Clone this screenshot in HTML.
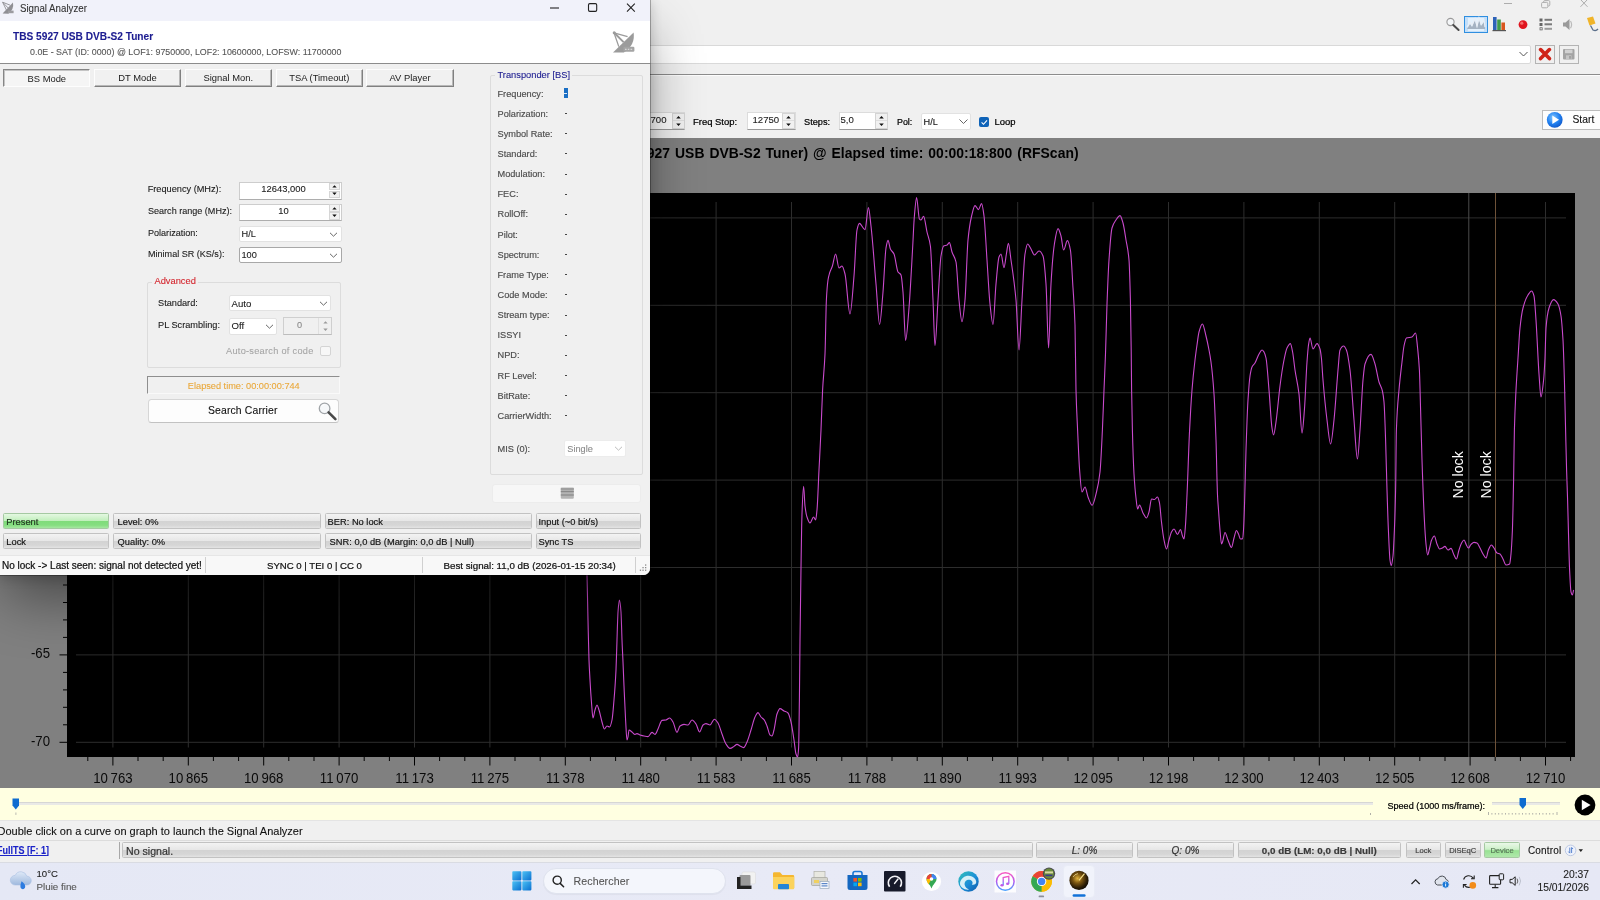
<!DOCTYPE html>
<html><head><meta charset="utf-8"><title>Signal Analyzer</title>
<style>

*{box-sizing:border-box}
html,body{margin:0;padding:0}
body{width:1600px;height:900px;overflow:hidden;background:#f0f0f0;font-family:"Liberation Sans",sans-serif;font-size:9.2px;color:#1a1a1a;position:relative}
.a{position:absolute;white-space:pre}
.t{position:absolute;white-space:pre;line-height:12px;height:12px;-webkit-text-stroke:.1px currentColor}
.btn3d{position:absolute;background:#f1f1f1;border:1px solid;border-color:#fdfdfd #808080 #808080 #fdfdfd;box-shadow:inset -1px -1px 0 #b8b8b8;text-align:center;font-size:9.4px;line-height:15px}
.btn3d.down{background:#f5f5f5;border-color:#868686 #fdfdfd #fdfdfd #868686;box-shadow:inset 1px 1px 0 #c4c4c4;line-height:17px}
.edit{position:absolute;background:#fff;border:1px solid #cdcdcd;border-bottom-color:#adadad}
.combo{position:absolute;background:#fff;border:1px solid #e2e2e2;border-radius:2px}
.pn{position:absolute;border:1px solid #c2c2c2;border-radius:1.5px;background:linear-gradient(#f3f3f3 0%,#e7e7e7 47%,#d3d3d3 53%,#d6d6d6 80%,#e3e3e3 100%);font-size:9.3px;line-height:16px;height:16px;white-space:pre;overflow:hidden;-webkit-text-stroke:.18px currentColor;color:#161616}
.pn.g{background:linear-gradient(#e4f8e1 0%,#c2efbd 47%,#80dc7b 53%,#86de81 80%,#a6e7a1 100%);border-color:#a5c9a2}
.lbl{color:#4c4c4c;-webkit-text-stroke:.15px #4c4c4c}
.sb{-webkit-text-stroke:.22px currentColor}

</style></head>
<body>
<div id="root" style="position:absolute;left:0;top:0;width:1600px;height:900px;overflow:hidden;will-change:transform">

<!-- main window top chrome -->
<div class="a" style="left:0;top:0;width:1600px;height:138px;background:#f0f0f0"></div>
<svg class="a" style="left:1495px;top:0" width="105" height="12" viewBox="0 0 105 12">
 <line x1="9" y1="3.5" x2="17" y2="3.5" stroke="#adadad" stroke-width="1"/>
 <rect x="46.6" y="2.4" width="6.2" height="5.4" rx="1.2" fill="none" stroke="#adadad" stroke-width="1"/>
 <path d="M48.6 2.2 V1.8 a1.2 1.2 0 0 1 1.2 -1.2 H53.6 a1.2 1.2 0 0 1 1.2 1.2 V4.8 a1.2 1.2 0 0 1 -1.2 1.2 H53" fill="none" stroke="#adadad" stroke-width="1"/>
 <path d="M85.5 -0.5 L92.5 6.8 M92.5 -0.5 L85.5 6.8" stroke="#adadad" stroke-width="1" fill="none"/>
</svg>
<!-- toolbar icons -->
<svg class="a" style="left:1440px;top:12px" width="160" height="26" viewBox="1440 12 160 26">
 <!-- magnifier -->
 <circle cx="1450.5" cy="22" r="3.6" fill="#f4f6f8" stroke="#9a9a9a" stroke-width="1.1"/>
 <line x1="1453.3" y1="25" x2="1458.6" y2="30" stroke="#4a4a4a" stroke-width="2" stroke-linecap="round"/>
 <!-- selected spectrum button -->
 <rect x="1464.5" y="16.5" width="23" height="16" fill="#c4dff9" stroke="#2f8fe0" stroke-width="1"/>
 <rect x="1468" y="18" width="16" height="13" fill="#fff" opacity=".55"/>
 <path d="M1467 29 L1470 24 L1472 27 L1475 20 L1477 28 L1479 19 L1481 26 L1484 22 L1485 29 Z" fill="#9aa8b8" opacity=".85"/>
 <path d="M1467 27 L1470 22 L1472 25 L1475 18.5 L1477 26 L1479 18 L1481 24 L1484 20 L1485 27" fill="none" stroke="#e8eef6" stroke-width="1.2"/>
 <!-- bar chart -->
 <rect x="1493" y="17" width="3.6" height="13.5" fill="#2d62b8"/>
 <rect x="1497.2" y="19.5" width="3.6" height="11" fill="#3f9a4d"/>
 <rect x="1501.4" y="22.5" width="3.6" height="8" fill="#d8561f"/>
 <rect x="1492.5" y="30" width="13.5" height="1.2" fill="#555"/>
 <!-- red dot -->
 <circle cx="1523" cy="24.6" r="4.4" fill="#e0151f"/>
 <circle cx="1521.8" cy="23.2" r="1.6" fill="#f46a6a"/>
 <!-- list icon -->
 <rect x="1539.5" y="18.5" width="3" height="3" fill="#666"/>
 <rect x="1539.5" y="23" width="3" height="3" fill="#666"/>
 <rect x="1540" y="27.7" width="2.2" height="2.2" fill="none" stroke="#666" stroke-width=".8"/>
 <rect x="1544.5" y="18.8" width="7.5" height="2" fill="#7a7a7a"/>
 <rect x="1544.5" y="23.3" width="7.5" height="2" fill="#7a7a7a"/>
 <rect x="1544.5" y="27.8" width="7.5" height="2" fill="#9a9a9a"/>
 <!-- speaker -->
 <path d="M1563 22.5 h2.5 l4 -3.5 v11 l-4 -3.5 h-2.5z" fill="#9a9a9a"/>
 <path d="M1570.5 21 q2.2 3.6 0 7.2" fill="none" stroke="#bbb" stroke-width="1.2"/>
 <!-- pin -->
 <path d="M1587 18 l6 -1.5 l2.5 7 l-6 2z" fill="#f0b429"/>
 <path d="M1590.5 25.5 l2.5 4.5 q3 1.5 5 -1" fill="none" stroke="#5a6f8a" stroke-width="1.3"/>
</svg>
<!-- combobox row -->
<div class="a" style="left:600px;top:45px;width:931px;height:19px;background:#fff;border:1px solid #d9d9d9;border-radius:2px"></div>
<svg class="a" style="left:1518px;top:50px" width="11" height="8" viewBox="0 0 11 8"><path d="M1.5 2 L5.5 6 L9.5 2" fill="none" stroke="#555" stroke-width="1"/></svg>
<div class="a" style="left:1535px;top:44.5px;width:20px;height:19.5px;background:#f0f0f0;border:1px solid #b4b4b4"></div>
<svg class="a" style="left:1538px;top:47px" width="14" height="14" viewBox="0 0 14 14"><path d="M2.6 2.6 L11.4 11.6 M11.4 2.6 L2.6 11.6" stroke="#cf2418" stroke-width="3.6" stroke-linecap="round"/></svg>
<div class="a" style="left:1559px;top:44.5px;width:19.5px;height:19.5px;background:#f0f0f0;border:1px solid #b4b4b4"></div>
<svg class="a" style="left:1562px;top:48px" width="14" height="13" viewBox="0 0 14 13"><rect x="1" y="1" width="11.5" height="10.5" rx="1" fill="#a4a4a4"/><rect x="3" y="1.6" width="7.5" height="3.6" fill="#d2d2d2"/><rect x="4" y="7.3" width="5.5" height="4.2" fill="#c6c6c6"/><rect x="7.2" y="8" width="1.6" height="2.8" fill="#9a9a9a"/></svg>
<div class="a" style="left:0;top:74px;width:1600px;height:1px;background:#8c8c8c"></div>
<div class="a" style="left:0;top:75px;width:1600px;height:1px;background:#fdfdfd"></div>
<!-- scan params row -->
<div class="edit" style="left:620px;top:112px;width:65px;height:17.5px;border-color:#dcdcdc;border-bottom-color:#9a9a9a"></div>
<div class="t" style="left:650.5px;top:113.5px;font-size:9.6px;color:#222">700</div>
<div class="a" style="left:672px;top:112.5px;width:13px;height:16.5px;background:#f1f1f1;border:1px solid #d4d4d4"></div><div class="a" style="left:673px;top:120.4px;width:11px;height:1px;background:#dedede"></div><svg class="a" style="left:674px;top:114px" width="9" height="14" viewBox="0 0 9 14"><path d="M2.2 4.6 L4.5 2 L6.8 4.6z M2.2 9.4 L4.5 12 L6.8 9.4z" fill="#111"/></svg>
<div class="t sb" style="left:693px;top:116px;font-size:9.45px;color:#000">Freq Stop:</div>
<div class="edit" style="left:746.5px;top:112px;width:49px;height:17.5px;border-color:#dcdcdc;border-bottom-color:#9a9a9a"></div>
<div class="t" style="left:752.5px;top:113.5px;font-size:9.6px;color:#222">12750</div>
<div class="a" style="left:782px;top:112.5px;width:13px;height:16.5px;background:#f1f1f1;border:1px solid #d4d4d4"></div><div class="a" style="left:783px;top:120.4px;width:11px;height:1px;background:#dedede"></div><svg class="a" style="left:784px;top:114px" width="9" height="14" viewBox="0 0 9 14"><path d="M2.2 4.6 L4.5 2 L6.8 4.6z M2.2 9.4 L4.5 12 L6.8 9.4z" fill="#111"/></svg>
<div class="t sb" style="left:804px;top:116px;font-size:9.2px;color:#000">Steps:</div>
<div class="edit" style="left:838.5px;top:112px;width:49.5px;height:17.5px;border-color:#dcdcdc;border-bottom-color:#9a9a9a"></div>
<div class="t" style="left:840.5px;top:113.5px;font-size:9.6px;color:#222">5,0</div>
<div class="a" style="left:874.5px;top:112.5px;width:13px;height:16.5px;background:#f1f1f1;border:1px solid #d4d4d4"></div><div class="a" style="left:875.5px;top:120.4px;width:11px;height:1px;background:#dedede"></div><svg class="a" style="left:876.5px;top:114px" width="9" height="14" viewBox="0 0 9 14"><path d="M2.2 4.6 L4.5 2 L6.8 4.6z M2.2 9.4 L4.5 12 L6.8 9.4z" fill="#111"/></svg>
<div class="t sb" style="left:897px;top:116px;font-size:8.9px;color:#000">Pol:</div>
<div class="combo" style="left:920.5px;top:112.5px;width:50.5px;height:17px"></div>
<div class="t" style="left:923.5px;top:115.5px;font-size:9.2px;color:#111">H/L</div>
<svg class="a" style="left:958px;top:118px" width="11" height="8" viewBox="0 0 11 8"><path d="M1.5 1.5 L5.5 5.5 L9.5 1.5" fill="none" stroke="#666" stroke-width="1"/></svg>
<div class="a" style="left:978.5px;top:116.5px;width:10.5px;height:10.5px;background:#0f63b8;border-radius:2px"></div>
<svg class="a" style="left:978.5px;top:116.5px" width="10.5" height="10.5" viewBox="0 0 10.5 10.5"><path d="M2.6 5.4 L4.5 7.3 L8 3.4" fill="none" stroke="#fff" stroke-width="1.1"/></svg>
<div class="t sb" style="left:994.5px;top:116px;font-size:9.45px;color:#000">Loop</div>
<!-- start button -->
<div class="a" style="left:1541.5px;top:109.5px;width:60px;height:20.5px;background:#fdfdfd;border:1px solid #bcbcbc"></div>
<svg class="a" style="left:1546px;top:111px" width="18" height="18" viewBox="0 0 18 18">
 <defs><radialGradient id="pb" cx="40%" cy="35%" r="75%"><stop offset="0" stop-color="#7ec4ff"/><stop offset=".55" stop-color="#1f7ff0"/><stop offset="1" stop-color="#0d4fc0"/></radialGradient></defs>
 <circle cx="8.7" cy="8.8" r="7.9" fill="url(#pb)"/>
 <path d="M6.3 4.6 L13 8.8 L6.3 13z" fill="#fff"/>
</svg>
<div class="t" style="left:1572.5px;top:113.5px;font-size:10.3px;color:#111">Start</div>

<svg style="position:absolute;left:0;top:138px" width="1600" height="650" viewBox="0 138 1600 650">
<rect x="0" y="138" width="1600" height="650" fill="#808080"/>
<rect x="67" y="193" width="1508" height="564" fill="#000"/>
<line x1="112.9" y1="202" x2="112.9" y2="747.5" stroke="#2d2d2d" stroke-width="1"/>
<line x1="188.3" y1="202" x2="188.3" y2="747.5" stroke="#2d2d2d" stroke-width="1"/>
<line x1="263.7" y1="202" x2="263.7" y2="747.5" stroke="#2d2d2d" stroke-width="1"/>
<line x1="339.1" y1="202" x2="339.1" y2="747.5" stroke="#2d2d2d" stroke-width="1"/>
<line x1="414.5" y1="202" x2="414.5" y2="747.5" stroke="#2d2d2d" stroke-width="1"/>
<line x1="489.9" y1="202" x2="489.9" y2="747.5" stroke="#2d2d2d" stroke-width="1"/>
<line x1="565.3" y1="202" x2="565.3" y2="747.5" stroke="#2d2d2d" stroke-width="1"/>
<line x1="640.7" y1="202" x2="640.7" y2="747.5" stroke="#2d2d2d" stroke-width="1"/>
<line x1="716.1" y1="202" x2="716.1" y2="747.5" stroke="#2d2d2d" stroke-width="1"/>
<line x1="791.5" y1="202" x2="791.5" y2="747.5" stroke="#2d2d2d" stroke-width="1"/>
<line x1="866.9" y1="202" x2="866.9" y2="747.5" stroke="#2d2d2d" stroke-width="1"/>
<line x1="942.3" y1="202" x2="942.3" y2="747.5" stroke="#2d2d2d" stroke-width="1"/>
<line x1="1017.7" y1="202" x2="1017.7" y2="747.5" stroke="#2d2d2d" stroke-width="1"/>
<line x1="1093.1" y1="202" x2="1093.1" y2="747.5" stroke="#2d2d2d" stroke-width="1"/>
<line x1="1168.5" y1="202" x2="1168.5" y2="747.5" stroke="#2d2d2d" stroke-width="1"/>
<line x1="1243.9" y1="202" x2="1243.9" y2="747.5" stroke="#2d2d2d" stroke-width="1"/>
<line x1="1319.3" y1="202" x2="1319.3" y2="747.5" stroke="#2d2d2d" stroke-width="1"/>
<line x1="1394.7" y1="202" x2="1394.7" y2="747.5" stroke="#2d2d2d" stroke-width="1"/>
<line x1="1545.5" y1="202" x2="1545.5" y2="747.5" stroke="#2d2d2d" stroke-width="1"/>
<line x1="76" y1="742.3" x2="1566" y2="742.3" stroke="#2d2d2d" stroke-width="1"/>
<line x1="76" y1="654.9" x2="1566" y2="654.9" stroke="#2d2d2d" stroke-width="1"/>
<line x1="76" y1="567.5" x2="1566" y2="567.5" stroke="#2d2d2d" stroke-width="1"/>
<line x1="76" y1="480.1" x2="1566" y2="480.1" stroke="#2d2d2d" stroke-width="1"/>
<line x1="76" y1="392.7" x2="1566" y2="392.7" stroke="#2d2d2d" stroke-width="1"/>
<line x1="76" y1="305.3" x2="1566" y2="305.3" stroke="#2d2d2d" stroke-width="1"/>
<line x1="76" y1="217.9" x2="1566" y2="217.9" stroke="#2d2d2d" stroke-width="1"/>
<line x1="1468.8" y1="193" x2="1468.8" y2="757" stroke="#4c4c4c" stroke-width="1"/>
<line x1="1495.5" y1="193" x2="1495.5" y2="757" stroke="#6e5238" stroke-width="1"/>
<path d="M586.5,560.0C586.7,565.0 586.8,569.1 587.0,575.0C587.3,586.7 587.7,605.9 588.0,620.0C588.3,634.1 588.7,651.1 589.0,660.0C589.3,668.9 589.7,674.2 590.0,680.0C590.5,689.2 591.1,697.6 591.6,704.0C592.1,709.6 592.5,718.0 593.0,718.0C593.7,718.0 594.3,712.1 595.0,710.0C595.7,707.9 596.3,705.0 597.0,705.0C597.7,705.0 598.3,708.0 599.0,710.0C600.0,713.0 601.0,718.6 602.0,722.0C602.8,724.7 603.6,729.0 604.4,729.0C605.3,729.0 606.1,726.0 607.0,726.0C607.9,726.0 608.7,727.0 609.6,727.0C610.4,727.0 611.2,723.7 612.0,720.0C612.7,716.9 613.3,708.0 614.0,700.0C614.7,692.0 615.3,683.8 616.0,670.0C616.3,663.1 616.7,649.7 617.0,640.0C617.3,630.3 617.7,616.5 618.0,612.0C618.5,605.7 618.9,600.0 619.4,600.0C619.9,600.0 620.5,605.4 621.0,612.0C621.3,616.1 621.7,631.8 622.0,640.0C622.3,648.2 622.7,654.3 623.0,662.0C623.3,669.7 623.7,678.5 624.0,686.0C624.5,698.1 625.1,710.9 625.6,720.0C626.1,727.9 626.5,740.0 627.0,740.0C627.3,740.0 627.7,738.4 628.0,737.0C628.3,735.6 628.7,730.0 629.0,730.0C630.0,730.0 631.0,731.3 632.0,732.0C633.0,732.7 634.0,734.4 635.0,734.4C635.7,734.4 636.3,733.6 637.0,733.6C638.0,733.6 639.0,734.7 640.0,735.0C641.3,735.4 642.7,735.8 644.0,736.0C645.3,736.2 646.7,736.6 648.0,736.6C649.3,736.6 650.7,732.4 652.0,732.4C653.0,732.4 654.0,734.4 655.0,734.4C656.0,734.4 657.0,731.0 658.0,729.0C659.3,726.4 660.7,720.7 662.0,720.4C663.3,720.1 664.7,720.2 666.0,720.0C667.2,719.8 668.4,718.0 669.6,718.0C670.7,718.0 671.9,720.2 673.0,722.0C674.3,724.1 675.7,732.4 677.0,732.4C678.0,732.4 679.0,726.7 680.0,726.0C681.3,725.1 682.7,724.4 684.0,724.4C685.3,724.4 686.7,725.0 688.0,725.0C689.3,725.0 690.7,720.0 692.0,720.0C693.3,720.0 694.7,722.1 696.0,724.0C697.2,725.7 698.4,732.0 699.6,732.0C700.7,732.0 701.9,725.9 703.0,725.0C704.0,724.2 705.0,723.6 706.0,723.6C707.3,723.6 708.7,725.0 710.0,725.0C711.5,725.0 712.9,719.2 714.4,719.2C715.6,719.2 716.8,721.2 718.0,723.0C719.3,725.0 720.7,730.5 722.0,734.0C723.3,737.5 724.7,742.0 726.0,744.0C727.3,746.0 728.7,748.4 730.0,748.4C731.3,748.4 732.7,747.2 734.0,746.4C735.0,745.8 736.0,744.4 737.0,744.4C738.0,744.4 739.0,745.5 740.0,746.0C741.2,746.6 742.4,747.6 743.6,747.6C744.7,747.6 745.9,744.4 747.0,742.0C748.3,739.2 749.7,734.2 751.0,730.0C752.3,725.8 753.7,719.6 755.0,717.0C756.0,715.0 757.0,712.6 758.0,712.6C759.0,712.6 760.0,715.9 761.0,717.0C762.0,718.1 763.0,718.4 764.0,719.6C765.0,720.8 766.0,723.5 767.0,726.0C768.0,728.5 769.0,734.2 770.0,735.0C770.7,735.5 771.3,736.0 772.0,736.0C772.7,736.0 773.3,732.5 774.0,730.0C775.0,726.2 776.0,716.7 777.0,714.0C778.0,711.3 779.0,708.6 780.0,708.6C781.3,708.6 782.7,710.3 784.0,711.0C785.3,711.7 786.7,711.8 788.0,713.0C789.0,713.9 790.0,718.0 791.0,722.0C792.0,726.0 793.0,733.5 794.0,740.0C794.7,744.3 795.3,752.1 796.0,754.0C796.5,755.5 797.1,757.0 797.6,757.0C797.9,757.0 798.3,753.4 798.6,748.0C798.9,743.7 799.1,720.2 799.4,700.0C799.6,684.8 799.8,657.0 800.0,640.0C800.3,611.7 800.7,590.3 801.0,568.0C801.2,554.6 801.4,539.7 801.6,530.0C801.7,523.6 801.9,517.5 802.0,514.0C802.5,500.0 803.1,486.4 803.6,486.4C804.1,486.4 804.5,502.2 805.0,506.0C805.7,511.4 806.3,515.0 807.0,517.0C808.0,520.0 809.0,523.0 810.0,523.0C811.2,523.0 812.4,517.0 813.6,517.0C814.3,517.0 814.9,520.0 815.6,520.0C816.1,520.0 816.5,514.8 817.0,510.0C817.7,503.2 818.3,483.3 819.0,470.0C819.7,456.7 820.3,444.9 821.0,430.0C821.5,418.1 822.1,400.2 822.6,390.0C823.4,374.7 824.2,372.0 825.0,354.0C825.5,343.5 825.9,308.9 826.4,300.0C826.9,289.8 827.5,283.5 828.0,280.0C828.5,276.5 829.1,274.7 829.6,273.0C830.5,270.0 831.5,268.8 832.4,266.0C833.5,262.8 834.5,254.0 835.6,254.0C836.7,254.0 837.9,268.0 839.0,268.0C840.0,268.0 841.0,266.0 842.0,266.0C843.0,266.0 844.0,270.2 845.0,274.0C846.7,280.4 848.3,314.0 850.0,314.0C851.3,314.0 852.7,291.8 854.0,276.0C855.0,264.1 856.0,234.5 857.0,230.0C857.8,226.4 858.6,223.4 859.4,223.4C861.3,223.4 863.1,229.6 865.0,229.6C866.1,229.6 867.3,207.6 868.4,207.6C869.3,207.6 870.1,218.6 871.0,226.0C872.7,240.3 874.3,265.0 876.0,284.0C877.2,297.7 878.4,324.4 879.6,324.4C880.7,324.4 881.9,305.2 883.0,292.0C884.0,280.4 885.0,253.8 886.0,248.0C886.7,244.1 887.3,240.4 888.0,240.4C888.8,240.4 889.6,247.3 890.4,249.0C891.6,251.5 892.8,251.5 894.0,254.0C895.3,256.8 896.7,269.9 898.0,272.0C899.0,273.6 900.0,273.1 901.0,275.0C901.7,276.3 902.3,284.3 903.0,292.0C903.9,302.0 904.7,340.4 905.6,340.4C906.7,340.4 907.9,321.7 909.0,308.0C910.1,294.3 911.3,271.6 912.4,252.0C913.1,240.5 913.7,223.7 914.4,216.0C915.1,207.6 915.9,197.6 916.6,197.6C917.5,197.6 918.5,218.0 919.4,219.0C919.9,219.6 920.5,220.0 921.0,220.0C921.9,220.0 922.7,216.4 923.6,216.4C924.7,216.4 925.9,227.1 927.0,232.0C928.1,236.9 929.3,238.0 930.4,246.0C931.3,252.1 932.1,281.1 933.0,300.0C933.7,314.5 934.3,345.6 935.0,345.6C936.0,345.6 937.0,314.9 938.0,300.0C939.0,285.1 940.0,262.0 941.0,256.0C941.9,250.8 942.7,246.5 943.6,246.0C944.7,245.4 945.9,245.5 947.0,245.0C947.8,244.6 948.6,242.6 949.4,242.6C950.3,242.6 951.1,249.4 952.0,252.0C953.3,256.0 954.7,256.2 956.0,262.0C957.0,266.3 958.0,290.8 959.0,300.0C960.0,309.2 961.0,321.6 962.0,321.6C963.0,321.6 964.0,310.6 965.0,300.0C966.0,289.4 967.0,250.2 968.0,240.0C969.2,227.8 970.4,221.0 971.6,216.0C972.7,211.3 973.9,205.6 975.0,205.6C976.1,205.6 977.3,209.6 978.4,209.6C979.5,209.6 980.5,203.6 981.6,203.6C982.4,203.6 983.2,210.0 984.0,216.0C985.0,223.5 986.0,245.3 987.0,260.0C988.0,274.7 989.0,294.7 990.0,304.0C991.0,313.3 992.0,324.4 993.0,324.4C994.0,324.4 995.0,294.8 996.0,284.0C997.0,273.2 998.0,259.5 999.0,257.0C999.7,255.4 1000.3,254.0 1001.0,254.0C1002.0,254.0 1003.0,267.6 1004.0,267.6C1004.8,267.6 1005.6,258.4 1006.4,254.0C1007.1,250.4 1007.7,243.4 1008.4,243.4C1009.3,243.4 1010.1,253.9 1011.0,260.0C1012.7,271.7 1014.3,281.4 1016.0,300.0C1017.0,311.1 1018.0,350.0 1019.0,350.0C1020.0,350.0 1021.0,316.0 1022.0,300.0C1023.0,284.0 1024.0,260.1 1025.0,254.0C1025.9,248.7 1026.7,244.0 1027.6,244.0C1028.7,244.0 1029.9,247.2 1031.0,249.0C1032.1,250.8 1033.3,255.0 1034.4,255.0C1035.9,255.0 1037.5,251.0 1039.0,251.0C1040.3,251.0 1041.7,252.9 1043.0,256.0C1044.0,258.3 1045.0,270.3 1046.0,284.0C1046.9,295.9 1047.7,348.0 1048.6,348.0C1049.4,348.0 1050.2,297.4 1051.0,284.0C1052.1,265.1 1053.3,251.1 1054.4,244.0C1055.6,236.4 1056.8,228.6 1058.0,228.6C1059.0,228.6 1060.0,232.6 1061.0,236.0C1061.9,239.0 1062.7,250.0 1063.6,250.0C1064.9,250.0 1066.1,240.6 1067.4,240.6C1068.4,240.6 1069.4,244.8 1070.4,250.0C1071.3,254.5 1072.1,273.8 1073.0,288.0C1073.7,298.9 1074.3,304.5 1075.0,325.0C1075.3,335.2 1075.7,377.5 1076.0,390.0C1076.5,409.9 1077.1,418.1 1077.6,430.0C1078.3,444.9 1078.9,461.5 1079.6,470.0C1080.4,480.2 1081.2,492.0 1082.0,492.0C1083.0,492.0 1084.0,487.0 1085.0,487.0C1086.0,487.0 1087.0,494.5 1088.0,497.0C1089.4,500.5 1090.8,505.3 1092.2,505.3C1093.6,505.3 1095.1,497.8 1096.5,492.0C1097.7,487.3 1098.8,482.4 1100.0,472.0C1100.8,464.9 1101.6,446.7 1102.4,430.0C1102.9,418.9 1103.5,403.1 1104.0,390.0C1104.5,377.8 1105.0,368.0 1105.5,354.0C1106.0,340.0 1106.5,317.4 1107.0,304.0C1107.7,286.2 1108.3,269.8 1109.0,260.0C1110.0,245.3 1111.0,231.5 1112.0,228.0C1113.3,223.4 1114.7,221.9 1116.0,220.0C1117.3,218.1 1118.7,215.6 1120.0,215.6C1121.0,215.6 1122.0,219.6 1123.0,223.0C1124.0,226.4 1125.0,233.9 1126.0,240.0C1127.0,246.1 1128.0,248.3 1129.0,260.0C1129.5,265.5 1129.9,281.1 1130.4,300.0C1130.7,310.8 1130.9,328.9 1131.2,350.0C1131.3,360.5 1131.5,380.8 1131.6,390.0C1131.9,408.5 1132.1,420.2 1132.4,430.0C1132.9,449.6 1133.5,465.0 1134.0,474.0C1134.7,485.3 1135.3,492.2 1136.0,498.0C1136.5,502.6 1137.1,509.0 1137.6,509.0C1138.3,509.0 1138.9,505.0 1139.6,505.0C1140.7,505.0 1141.9,511.0 1143.0,513.0C1144.2,515.1 1145.3,518.0 1146.5,518.0C1147.3,518.0 1148.2,514.7 1149.0,512.0C1149.8,509.3 1150.7,499.0 1151.5,499.0C1152.5,499.0 1153.5,499.5 1154.5,499.5C1155.5,499.5 1156.5,497.0 1157.5,497.0C1158.2,497.0 1158.8,500.0 1159.5,503.0C1160.2,506.0 1160.8,516.5 1161.5,522.0C1162.3,528.9 1163.2,536.0 1164.0,540.0C1164.8,544.0 1165.7,549.0 1166.5,549.0C1167.3,549.0 1168.2,542.8 1169.0,540.0C1169.8,537.2 1170.7,533.5 1171.5,532.0C1172.3,530.5 1173.2,529.0 1174.0,529.0C1175.2,529.0 1176.3,534.5 1177.5,534.5C1178.5,534.5 1179.5,529.5 1180.5,529.5C1181.2,529.5 1181.8,534.4 1182.5,536.0C1183.0,537.2 1183.5,539.0 1184.0,539.0C1184.5,539.0 1185.0,531.4 1185.5,525.0C1186.0,518.6 1186.5,506.0 1187.0,495.0C1187.9,475.9 1188.7,447.3 1189.6,430.0C1190.4,414.0 1191.2,400.1 1192.0,390.0C1193.0,377.4 1194.0,368.5 1195.0,360.0C1195.7,354.3 1196.3,349.6 1197.0,345.0C1197.7,340.4 1198.3,334.4 1199.0,332.0C1200.1,327.9 1201.3,324.0 1202.4,324.0C1203.6,324.0 1204.8,331.3 1206.0,336.0C1207.0,339.9 1208.0,344.7 1209.0,350.0C1209.7,353.5 1210.3,357.0 1211.0,362.0C1212.0,369.5 1213.0,379.1 1214.0,394.0C1214.7,404.0 1215.3,420.9 1216.0,440.0C1216.5,454.3 1217.0,484.6 1217.5,495.0C1217.8,501.9 1218.2,505.3 1218.5,510.0C1219.0,517.1 1219.5,524.5 1220.0,530.0C1220.5,535.5 1221.0,544.0 1221.5,544.0C1221.8,544.0 1222.2,542.8 1222.5,542.0C1223.3,539.9 1224.2,532.5 1225.0,532.5C1226.0,532.5 1227.0,537.7 1228.0,540.0C1229.2,542.7 1230.3,547.5 1231.5,547.5C1232.3,547.5 1233.2,540.8 1234.0,538.0C1234.8,535.2 1235.7,530.5 1236.5,530.5C1237.2,530.5 1237.8,532.6 1238.5,534.0C1239.2,535.4 1239.8,539.0 1240.5,539.0C1241.2,539.0 1241.8,538.9 1242.5,538.8C1242.8,538.7 1243.2,534.3 1243.5,530.0C1243.8,525.7 1244.2,514.8 1244.5,505.0C1245.0,490.3 1245.5,465.0 1246.0,450.0C1246.7,430.0 1247.3,410.8 1248.0,400.0C1248.7,389.2 1249.3,380.4 1250.0,376.0C1250.7,371.6 1251.3,368.4 1252.0,367.0C1253.0,364.9 1254.0,364.7 1255.0,363.0C1256.3,360.8 1257.7,356.2 1259.0,354.0C1260.0,352.3 1261.0,350.0 1262.0,350.0C1262.7,350.0 1263.3,351.0 1264.0,352.0C1264.7,353.0 1265.3,355.0 1266.0,358.0C1267.0,362.5 1268.0,378.4 1269.0,390.0C1270.0,401.6 1271.0,421.8 1272.0,428.0C1272.5,431.3 1273.1,435.0 1273.6,435.0C1274.4,435.0 1275.2,427.3 1276.0,422.0C1277.3,413.2 1278.7,396.1 1280.0,386.0C1281.3,375.9 1282.7,366.5 1284.0,360.0C1285.0,355.1 1286.0,350.0 1287.0,348.0C1288.1,345.8 1289.3,343.6 1290.4,343.6C1291.1,343.6 1291.9,348.3 1292.6,352.0C1293.4,356.0 1294.2,364.6 1295.0,370.0C1296.3,379.0 1297.7,382.9 1299.0,394.0C1300.0,402.4 1301.0,433.0 1302.0,433.0C1302.8,433.0 1303.6,420.1 1304.4,410.0C1305.3,399.1 1306.1,373.9 1307.0,362.0C1307.5,355.1 1308.0,348.3 1308.5,345.0C1309.0,341.7 1309.5,338.0 1310.0,338.0C1311.0,338.0 1312.0,349.0 1313.0,349.0C1314.3,349.0 1315.7,343.6 1317.0,343.6C1318.0,343.6 1319.0,346.0 1320.0,349.0C1320.5,350.4 1320.9,353.9 1321.4,358.0C1321.9,362.6 1322.5,373.7 1323.0,380.0C1324.3,395.8 1325.7,409.4 1327.0,420.0C1328.2,429.6 1329.4,444.0 1330.6,444.0C1331.7,444.0 1332.9,430.1 1334.0,420.0C1335.3,408.1 1336.7,384.6 1338.0,370.0C1338.7,362.7 1339.3,351.4 1340.0,350.0C1341.2,347.4 1342.4,346.0 1343.6,346.0C1344.5,346.0 1345.5,347.9 1346.4,350.0C1347.6,352.7 1348.8,360.8 1350.0,370.0C1351.3,380.2 1352.7,404.1 1354.0,420.0C1355.1,433.5 1356.3,459.0 1357.4,459.0C1358.3,459.0 1359.1,441.5 1360.0,430.0C1361.0,416.7 1362.0,390.6 1363.0,380.0C1363.7,373.0 1364.3,366.0 1365.0,364.0C1367.0,358.0 1369.0,354.4 1371.0,354.4C1372.3,354.4 1373.7,359.8 1375.0,364.0C1376.3,368.2 1377.7,377.6 1379.0,382.0C1380.1,385.8 1381.3,386.4 1382.4,391.0C1382.9,393.2 1383.5,396.3 1384.0,402.0C1384.5,407.7 1385.1,424.7 1385.6,440.0C1386.1,453.4 1386.5,475.2 1387.0,490.0C1387.5,504.8 1387.9,519.4 1388.4,530.0C1388.9,542.1 1389.5,556.1 1390.0,560.0C1390.4,562.9 1390.8,565.6 1391.2,565.6C1391.8,565.6 1392.4,561.1 1393.0,556.0C1393.5,552.0 1393.9,541.2 1394.4,530.0C1394.8,520.4 1395.2,508.9 1395.6,490.0C1395.9,477.4 1396.1,437.7 1396.4,430.0C1397.3,405.0 1398.1,400.1 1399.0,390.0C1400.0,378.3 1401.0,370.6 1402.0,362.0C1402.7,356.3 1403.3,349.2 1404.0,346.0C1404.8,342.2 1405.6,338.3 1406.4,338.0C1408.3,337.3 1410.1,337.6 1412.0,337.0C1413.2,336.6 1414.4,333.0 1415.6,333.0C1416.3,333.0 1416.9,341.8 1417.6,348.0C1418.2,353.6 1418.8,358.9 1419.4,370.0C1419.8,377.4 1420.2,396.2 1420.6,410.0C1421.1,426.1 1421.5,446.1 1422.0,460.0C1422.8,483.9 1423.6,505.2 1424.4,520.0C1424.9,529.8 1425.5,539.0 1426.0,544.0C1426.5,549.0 1427.1,555.0 1427.6,555.0C1428.3,555.0 1428.9,550.5 1429.6,548.0C1430.3,545.5 1430.9,541.4 1431.6,540.0C1432.5,538.0 1433.5,536.0 1434.4,536.0C1435.3,536.0 1436.1,541.9 1437.0,544.0C1437.9,546.1 1438.7,549.0 1439.6,549.0C1440.5,549.0 1441.5,548.4 1442.4,548.0C1443.3,547.6 1444.1,546.4 1445.0,546.4C1446.0,546.4 1447.0,550.0 1448.0,550.0C1449.0,550.0 1450.0,548.4 1451.0,548.4C1452.0,548.4 1453.0,553.1 1454.0,555.0C1454.8,556.5 1455.6,559.0 1456.4,559.0C1457.3,559.0 1458.1,552.6 1459.0,550.0C1459.9,547.4 1460.7,544.5 1461.6,543.0C1462.4,541.6 1463.2,540.0 1464.0,540.0C1464.8,540.0 1465.6,543.6 1466.4,545.0C1467.1,546.2 1467.7,548.0 1468.4,548.0C1469.3,548.0 1470.1,545.2 1471.0,544.4C1472.0,543.5 1473.0,542.4 1474.0,542.4C1475.0,542.4 1476.0,542.6 1477.0,543.0C1478.0,543.4 1479.0,546.2 1480.0,548.0C1481.0,549.8 1482.0,552.4 1483.0,554.0C1484.0,555.6 1485.0,558.0 1486.0,558.0C1486.8,558.0 1487.6,551.8 1488.4,550.0C1489.4,547.8 1490.4,545.0 1491.4,545.0C1492.3,545.0 1493.1,546.8 1494.0,548.0C1495.0,549.4 1496.0,552.4 1497.0,553.0C1498.0,553.6 1499.0,553.4 1500.0,554.0C1501.0,554.6 1502.0,557.2 1503.0,559.0C1504.0,560.8 1505.0,565.0 1506.0,565.0C1507.2,565.0 1508.4,564.7 1509.6,564.0C1510.1,563.7 1510.5,558.7 1511.0,554.0C1511.5,549.3 1511.9,541.5 1512.4,530.0C1512.8,520.2 1513.2,500.3 1513.6,480.0C1513.9,466.5 1514.1,440.0 1514.4,430.0C1514.9,410.0 1515.5,400.5 1516.0,390.0C1516.7,376.9 1517.3,368.3 1518.0,358.0C1518.7,347.7 1519.3,334.3 1520.0,328.0C1521.0,318.5 1522.0,311.9 1523.0,308.0C1524.7,301.5 1526.3,297.5 1528.0,295.0C1529.2,293.2 1530.4,291.0 1531.6,291.0C1532.4,291.0 1533.2,293.1 1534.0,296.0C1534.7,298.4 1535.3,310.5 1536.0,320.0C1537.0,334.2 1538.0,360.2 1539.0,374.0C1539.7,383.2 1540.3,397.0 1541.0,397.0C1541.9,397.0 1542.7,388.3 1543.6,380.0C1544.1,375.5 1544.5,367.8 1545.0,358.0C1545.3,351.0 1545.7,332.1 1546.0,328.0C1547.0,315.8 1548.0,311.0 1549.0,308.0C1550.5,303.4 1552.1,299.6 1553.6,299.6C1555.1,299.6 1556.5,301.6 1558.0,304.0C1559.0,305.7 1560.0,309.8 1561.0,316.0C1561.7,320.1 1562.3,328.5 1563.0,340.0C1563.5,348.1 1563.9,364.1 1564.4,380.0C1564.8,393.6 1565.2,413.7 1565.6,430.0C1565.9,443.6 1566.3,458.6 1566.6,470.0C1566.9,481.4 1567.3,488.8 1567.6,500.0C1567.9,508.9 1568.1,520.6 1568.4,530.0C1568.8,544.2 1569.2,561.4 1569.6,570.0C1570.1,580.1 1570.5,590.2 1571.0,592.0C1571.5,593.8 1571.9,595.0 1572.4,595.0C1572.8,595.0 1573.2,591.7 1573.6,590.0" fill="none" stroke="#c94acc" stroke-width="1.1" stroke-linejoin="round"/>
<text transform="translate(1462.5,498.5) rotate(-90)" font-family="Liberation Sans" font-size="14.2" fill="#fff">No lock</text>
<text transform="translate(1490.5,498.5) rotate(-90)" font-family="Liberation Sans" font-size="14.2" fill="#fff">No lock</text>
<line x1="112.9" y1="757" x2="112.9" y2="765.5" stroke="#000" stroke-width="1"/>
<text transform="translate(112.9,783.4) scale(1,1.09)" text-anchor="middle" font-family="Liberation Sans" font-size="13.2" fill="#0a0a0a">10<tspan dx="-0.9"> 763</tspan></text>
<line x1="188.3" y1="757" x2="188.3" y2="765.5" stroke="#000" stroke-width="1"/>
<text transform="translate(188.3,783.4) scale(1,1.09)" text-anchor="middle" font-family="Liberation Sans" font-size="13.2" fill="#0a0a0a">10<tspan dx="-0.9"> 865</tspan></text>
<line x1="263.7" y1="757" x2="263.7" y2="765.5" stroke="#000" stroke-width="1"/>
<text transform="translate(263.7,783.4) scale(1,1.09)" text-anchor="middle" font-family="Liberation Sans" font-size="13.2" fill="#0a0a0a">10<tspan dx="-0.9"> 968</tspan></text>
<line x1="339.1" y1="757" x2="339.1" y2="765.5" stroke="#000" stroke-width="1"/>
<text transform="translate(339.1,783.4) scale(1,1.09)" text-anchor="middle" font-family="Liberation Sans" font-size="13.2" fill="#0a0a0a">11<tspan dx="-0.9"> 070</tspan></text>
<line x1="414.5" y1="757" x2="414.5" y2="765.5" stroke="#000" stroke-width="1"/>
<text transform="translate(414.5,783.4) scale(1,1.09)" text-anchor="middle" font-family="Liberation Sans" font-size="13.2" fill="#0a0a0a">11<tspan dx="-0.9"> 173</tspan></text>
<line x1="489.9" y1="757" x2="489.9" y2="765.5" stroke="#000" stroke-width="1"/>
<text transform="translate(489.9,783.4) scale(1,1.09)" text-anchor="middle" font-family="Liberation Sans" font-size="13.2" fill="#0a0a0a">11<tspan dx="-0.9"> 275</tspan></text>
<line x1="565.3" y1="757" x2="565.3" y2="765.5" stroke="#000" stroke-width="1"/>
<text transform="translate(565.3,783.4) scale(1,1.09)" text-anchor="middle" font-family="Liberation Sans" font-size="13.2" fill="#0a0a0a">11<tspan dx="-0.9"> 378</tspan></text>
<line x1="640.7" y1="757" x2="640.7" y2="765.5" stroke="#000" stroke-width="1"/>
<text transform="translate(640.7,783.4) scale(1,1.09)" text-anchor="middle" font-family="Liberation Sans" font-size="13.2" fill="#0a0a0a">11<tspan dx="-0.9"> 480</tspan></text>
<line x1="716.1" y1="757" x2="716.1" y2="765.5" stroke="#000" stroke-width="1"/>
<text transform="translate(716.1,783.4) scale(1,1.09)" text-anchor="middle" font-family="Liberation Sans" font-size="13.2" fill="#0a0a0a">11<tspan dx="-0.9"> 583</tspan></text>
<line x1="791.5" y1="757" x2="791.5" y2="765.5" stroke="#000" stroke-width="1"/>
<text transform="translate(791.5,783.4) scale(1,1.09)" text-anchor="middle" font-family="Liberation Sans" font-size="13.2" fill="#0a0a0a">11<tspan dx="-0.9"> 685</tspan></text>
<line x1="866.9" y1="757" x2="866.9" y2="765.5" stroke="#000" stroke-width="1"/>
<text transform="translate(866.9,783.4) scale(1,1.09)" text-anchor="middle" font-family="Liberation Sans" font-size="13.2" fill="#0a0a0a">11<tspan dx="-0.9"> 788</tspan></text>
<line x1="942.3" y1="757" x2="942.3" y2="765.5" stroke="#000" stroke-width="1"/>
<text transform="translate(942.3,783.4) scale(1,1.09)" text-anchor="middle" font-family="Liberation Sans" font-size="13.2" fill="#0a0a0a">11<tspan dx="-0.9"> 890</tspan></text>
<line x1="1017.7" y1="757" x2="1017.7" y2="765.5" stroke="#000" stroke-width="1"/>
<text transform="translate(1017.7,783.4) scale(1,1.09)" text-anchor="middle" font-family="Liberation Sans" font-size="13.2" fill="#0a0a0a">11<tspan dx="-0.9"> 993</tspan></text>
<line x1="1093.1" y1="757" x2="1093.1" y2="765.5" stroke="#000" stroke-width="1"/>
<text transform="translate(1093.1,783.4) scale(1,1.09)" text-anchor="middle" font-family="Liberation Sans" font-size="13.2" fill="#0a0a0a">12<tspan dx="-0.9"> 095</tspan></text>
<line x1="1168.5" y1="757" x2="1168.5" y2="765.5" stroke="#000" stroke-width="1"/>
<text transform="translate(1168.5,783.4) scale(1,1.09)" text-anchor="middle" font-family="Liberation Sans" font-size="13.2" fill="#0a0a0a">12<tspan dx="-0.9"> 198</tspan></text>
<line x1="1243.9" y1="757" x2="1243.9" y2="765.5" stroke="#000" stroke-width="1"/>
<text transform="translate(1243.9,783.4) scale(1,1.09)" text-anchor="middle" font-family="Liberation Sans" font-size="13.2" fill="#0a0a0a">12<tspan dx="-0.9"> 300</tspan></text>
<line x1="1319.3" y1="757" x2="1319.3" y2="765.5" stroke="#000" stroke-width="1"/>
<text transform="translate(1319.3,783.4) scale(1,1.09)" text-anchor="middle" font-family="Liberation Sans" font-size="13.2" fill="#0a0a0a">12<tspan dx="-0.9"> 403</tspan></text>
<line x1="1394.7" y1="757" x2="1394.7" y2="765.5" stroke="#000" stroke-width="1"/>
<text transform="translate(1394.7,783.4) scale(1,1.09)" text-anchor="middle" font-family="Liberation Sans" font-size="13.2" fill="#0a0a0a">12<tspan dx="-0.9"> 505</tspan></text>
<line x1="1470.1" y1="757" x2="1470.1" y2="765.5" stroke="#000" stroke-width="1"/>
<text transform="translate(1470.1,783.4) scale(1,1.09)" text-anchor="middle" font-family="Liberation Sans" font-size="13.2" fill="#0a0a0a">12<tspan dx="-0.9"> 608</tspan></text>
<line x1="1545.5" y1="757" x2="1545.5" y2="765.5" stroke="#000" stroke-width="1"/>
<text transform="translate(1545.5,783.4) scale(1,1.09)" text-anchor="middle" font-family="Liberation Sans" font-size="13.2" fill="#0a0a0a">12<tspan dx="-0.9"> 710</tspan></text>
<line x1="87.8" y1="757" x2="87.8" y2="761" stroke="#000" stroke-width="1"/>
<line x1="138.0" y1="757" x2="138.0" y2="761" stroke="#000" stroke-width="1"/>
<line x1="163.2" y1="757" x2="163.2" y2="761" stroke="#000" stroke-width="1"/>
<line x1="213.4" y1="757" x2="213.4" y2="761" stroke="#000" stroke-width="1"/>
<line x1="238.6" y1="757" x2="238.6" y2="761" stroke="#000" stroke-width="1"/>
<line x1="288.8" y1="757" x2="288.8" y2="761" stroke="#000" stroke-width="1"/>
<line x1="314.0" y1="757" x2="314.0" y2="761" stroke="#000" stroke-width="1"/>
<line x1="364.2" y1="757" x2="364.2" y2="761" stroke="#000" stroke-width="1"/>
<line x1="389.4" y1="757" x2="389.4" y2="761" stroke="#000" stroke-width="1"/>
<line x1="439.6" y1="757" x2="439.6" y2="761" stroke="#000" stroke-width="1"/>
<line x1="464.8" y1="757" x2="464.8" y2="761" stroke="#000" stroke-width="1"/>
<line x1="515.0" y1="757" x2="515.0" y2="761" stroke="#000" stroke-width="1"/>
<line x1="540.2" y1="757" x2="540.2" y2="761" stroke="#000" stroke-width="1"/>
<line x1="590.4" y1="757" x2="590.4" y2="761" stroke="#000" stroke-width="1"/>
<line x1="615.6" y1="757" x2="615.6" y2="761" stroke="#000" stroke-width="1"/>
<line x1="665.8" y1="757" x2="665.8" y2="761" stroke="#000" stroke-width="1"/>
<line x1="691.0" y1="757" x2="691.0" y2="761" stroke="#000" stroke-width="1"/>
<line x1="741.2" y1="757" x2="741.2" y2="761" stroke="#000" stroke-width="1"/>
<line x1="766.4" y1="757" x2="766.4" y2="761" stroke="#000" stroke-width="1"/>
<line x1="816.6" y1="757" x2="816.6" y2="761" stroke="#000" stroke-width="1"/>
<line x1="841.8" y1="757" x2="841.8" y2="761" stroke="#000" stroke-width="1"/>
<line x1="892.0" y1="757" x2="892.0" y2="761" stroke="#000" stroke-width="1"/>
<line x1="917.2" y1="757" x2="917.2" y2="761" stroke="#000" stroke-width="1"/>
<line x1="967.4" y1="757" x2="967.4" y2="761" stroke="#000" stroke-width="1"/>
<line x1="992.6" y1="757" x2="992.6" y2="761" stroke="#000" stroke-width="1"/>
<line x1="1042.8" y1="757" x2="1042.8" y2="761" stroke="#000" stroke-width="1"/>
<line x1="1068.0" y1="757" x2="1068.0" y2="761" stroke="#000" stroke-width="1"/>
<line x1="1118.2" y1="757" x2="1118.2" y2="761" stroke="#000" stroke-width="1"/>
<line x1="1143.4" y1="757" x2="1143.4" y2="761" stroke="#000" stroke-width="1"/>
<line x1="1193.6" y1="757" x2="1193.6" y2="761" stroke="#000" stroke-width="1"/>
<line x1="1218.8" y1="757" x2="1218.8" y2="761" stroke="#000" stroke-width="1"/>
<line x1="1269.0" y1="757" x2="1269.0" y2="761" stroke="#000" stroke-width="1"/>
<line x1="1294.2" y1="757" x2="1294.2" y2="761" stroke="#000" stroke-width="1"/>
<line x1="1344.4" y1="757" x2="1344.4" y2="761" stroke="#000" stroke-width="1"/>
<line x1="1369.6" y1="757" x2="1369.6" y2="761" stroke="#000" stroke-width="1"/>
<line x1="1419.8" y1="757" x2="1419.8" y2="761" stroke="#000" stroke-width="1"/>
<line x1="1445.0" y1="757" x2="1445.0" y2="761" stroke="#000" stroke-width="1"/>
<line x1="1495.2" y1="757" x2="1495.2" y2="761" stroke="#000" stroke-width="1"/>
<line x1="1520.4" y1="757" x2="1520.4" y2="761" stroke="#000" stroke-width="1"/>
<line x1="1570.6" y1="757" x2="1570.6" y2="761" stroke="#000" stroke-width="1"/>
<line x1="59.5" y1="742.3" x2="67" y2="742.3" stroke="#000" stroke-width="1"/>
<text transform="translate(50,745.7) scale(1,1.09)" text-anchor="end" font-family="Liberation Sans" font-size="13.2" fill="#0a0a0a">-70</text>
<line x1="63" y1="724.8" x2="67" y2="724.8" stroke="#000" stroke-width="1"/>
<line x1="63" y1="707.3" x2="67" y2="707.3" stroke="#000" stroke-width="1"/>
<line x1="63" y1="689.9" x2="67" y2="689.9" stroke="#000" stroke-width="1"/>
<line x1="63" y1="672.4" x2="67" y2="672.4" stroke="#000" stroke-width="1"/>
<line x1="59.5" y1="654.9" x2="67" y2="654.9" stroke="#000" stroke-width="1"/>
<text transform="translate(50,658.3) scale(1,1.09)" text-anchor="end" font-family="Liberation Sans" font-size="13.2" fill="#0a0a0a">-65</text>
<line x1="63" y1="637.4" x2="67" y2="637.4" stroke="#000" stroke-width="1"/>
<line x1="63" y1="619.9" x2="67" y2="619.9" stroke="#000" stroke-width="1"/>
<line x1="63" y1="602.5" x2="67" y2="602.5" stroke="#000" stroke-width="1"/>
<line x1="63" y1="585.0" x2="67" y2="585.0" stroke="#000" stroke-width="1"/>
<line x1="59.5" y1="567.5" x2="67" y2="567.5" stroke="#000" stroke-width="1"/>
<text transform="translate(50,570.9) scale(1,1.09)" text-anchor="end" font-family="Liberation Sans" font-size="13.2" fill="#0a0a0a">-60</text>
<line x1="63" y1="550.0" x2="67" y2="550.0" stroke="#000" stroke-width="1"/>
<line x1="63" y1="532.5" x2="67" y2="532.5" stroke="#000" stroke-width="1"/>
<line x1="63" y1="515.1" x2="67" y2="515.1" stroke="#000" stroke-width="1"/>
<line x1="63" y1="497.6" x2="67" y2="497.6" stroke="#000" stroke-width="1"/>
<line x1="59.5" y1="480.1" x2="67" y2="480.1" stroke="#000" stroke-width="1"/>
<text transform="translate(50,483.5) scale(1,1.09)" text-anchor="end" font-family="Liberation Sans" font-size="13.2" fill="#0a0a0a">-55</text>
<line x1="63" y1="462.6" x2="67" y2="462.6" stroke="#000" stroke-width="1"/>
<line x1="63" y1="445.1" x2="67" y2="445.1" stroke="#000" stroke-width="1"/>
<line x1="63" y1="427.7" x2="67" y2="427.7" stroke="#000" stroke-width="1"/>
<line x1="63" y1="410.2" x2="67" y2="410.2" stroke="#000" stroke-width="1"/>
<line x1="59.5" y1="392.7" x2="67" y2="392.7" stroke="#000" stroke-width="1"/>
<text transform="translate(50,396.1) scale(1,1.09)" text-anchor="end" font-family="Liberation Sans" font-size="13.2" fill="#0a0a0a">-50</text>
<line x1="63" y1="375.2" x2="67" y2="375.2" stroke="#000" stroke-width="1"/>
<line x1="63" y1="357.7" x2="67" y2="357.7" stroke="#000" stroke-width="1"/>
<line x1="63" y1="340.3" x2="67" y2="340.3" stroke="#000" stroke-width="1"/>
<line x1="63" y1="322.8" x2="67" y2="322.8" stroke="#000" stroke-width="1"/>
<line x1="59.5" y1="305.3" x2="67" y2="305.3" stroke="#000" stroke-width="1"/>
<text transform="translate(50,308.7) scale(1,1.09)" text-anchor="end" font-family="Liberation Sans" font-size="13.2" fill="#0a0a0a">-45</text>
<line x1="63" y1="287.8" x2="67" y2="287.8" stroke="#000" stroke-width="1"/>
<line x1="63" y1="270.3" x2="67" y2="270.3" stroke="#000" stroke-width="1"/>
<line x1="63" y1="252.9" x2="67" y2="252.9" stroke="#000" stroke-width="1"/>
<line x1="63" y1="235.4" x2="67" y2="235.4" stroke="#000" stroke-width="1"/>
<line x1="59.5" y1="217.9" x2="67" y2="217.9" stroke="#000" stroke-width="1"/>
<text transform="translate(50,221.3) scale(1,1.09)" text-anchor="end" font-family="Liberation Sans" font-size="13.2" fill="#0a0a0a">-40</text>
<line x1="63" y1="200.4" x2="67" y2="200.4" stroke="#000" stroke-width="1"/>
<text x="646.8" y="157.5" font-family="Liberation Sans" font-size="13.9" font-weight="700" fill="#000" text-anchor="start" letter-spacing=".05" word-spacing="1" xml:space="preserve">927 USB DVB-S2 Tuner) @ Elapsed time: 00:00:18:800 (RFScan)</text>
</svg>

<!-- yellow slider band -->
<div class="a" style="left:0;top:788px;width:1600px;height:32px;background:#ffffe1"></div>
<div class="a" style="left:19px;top:801.6px;width:1354px;height:3px;background:#e9e9e6;border-top:1px solid #d6d6d4"></div>
<svg class="a" style="left:11px;top:797px" width="10" height="20" viewBox="0 0 10 20"><path d="M1.5 1.5 H8 V8.5 L4.75 12.5 L1.5 8.5z" fill="#0f6cd0"/><rect x="4.4" y="15.5" width="1" height="2.4" fill="#b8b8b0"/></svg>

<div class="a" style="left:1369.7px;top:812.5px;width:1px;height:2.5px;background:#b0b0a8"></div>
<div class="t sb" style="left:1387.5px;top:799.5px;font-size:9.05px;color:#000">Speed (1000 ms/frame):</div>
<div class="a" style="left:1492px;top:801.6px;width:68px;height:3px;background:#e9e9e6;border-top:1px solid #d6d6d4"></div>
<svg class="a" style="left:1518px;top:797px" width="10" height="14" viewBox="0 0 10 14"><path d="M1.5 1 H8 V8 L4.75 12 L1.5 8z" fill="#0f6cd0"/></svg>
<svg class="a" style="left:1487px;top:812px" width="72" height="4" viewBox="0 0 72 4">
 <g fill="#b4b4ac"><rect x="1" y="0" width="1" height="3"/><rect x="69.5" y="0" width="1" height="3"/>
 <rect x="4.4" y="1" width="1" height="1.6"/><rect x="7.8" y="1" width="1" height="1.6"/><rect x="11.2" y="1" width="1" height="1.6"/><rect x="14.6" y="1" width="1" height="1.6"/><rect x="18" y="1" width="1" height="1.6"/><rect x="21.4" y="1" width="1" height="1.6"/><rect x="24.8" y="1" width="1" height="1.6"/><rect x="28.2" y="1" width="1" height="1.6"/><rect x="31.6" y="1" width="1" height="1.6"/><rect x="35" y="1" width="1" height="1.6"/><rect x="38.4" y="1" width="1" height="1.6"/><rect x="41.8" y="1" width="1" height="1.6"/><rect x="45.2" y="1" width="1" height="1.6"/><rect x="48.6" y="1" width="1" height="1.6"/><rect x="52" y="1" width="1" height="1.6"/><rect x="55.4" y="1" width="1" height="1.6"/><rect x="58.8" y="1" width="1" height="1.6"/><rect x="62.2" y="1" width="1" height="1.6"/><rect x="65.6" y="1" width="1" height="1.6"/></g></svg>
<svg class="a" style="left:1573px;top:793px" width="24" height="24" viewBox="0 0 24 24"><circle cx="12" cy="12" r="10.4" fill="#000"/><path d="M8.8 6.8 L17.6 12 L8.8 17.2z" fill="#fff"/></svg>
<!-- hint line -->
<div class="a" style="left:0;top:820px;width:1600px;height:20px;background:#f0f0f0;border-top:1px solid #e4e4e4"></div>
<div class="t" style="left:-2.5px;top:824.5px;font-size:11px;color:#111">Double click on a curve on graph to launch the Signal Analyzer</div>
<!-- status bar -->
<div class="a" style="left:0;top:840px;width:1600px;height:22px;background:#f0f0f0;border-top:1px solid #dcdcdc"></div>
<div class="t" style="left:-3px;top:844.5px;font-size:10px;color:#1a22c8;font-weight:700;text-decoration:underline;transform:scaleX(.9);transform-origin:0 0">FullTS [F: 1]</div>
<div class="a" style="left:118.5px;top:842px;width:1px;height:17px;background:#a8a8a8"></div>
<div class="pn" style="left:122px;top:841.5px;width:910.5px;height:16.5px;font-size:10.6px;color:#333;padding-left:3px;line-height:16px">No signal.</div>
<div class="pn" style="left:1036px;top:841.5px;width:97px;height:16.5px;font-size:10px;color:#333;text-align:center;font-style:italic;line-height:16px;-webkit-text-stroke:.2px #333">L: 0%</div>
<div class="pn" style="left:1137px;top:841.5px;width:97px;height:16.5px;font-size:10px;color:#333;text-align:center;font-style:italic;line-height:16px;-webkit-text-stroke:.2px #333">Q: 0%</div>
<div class="pn" style="left:1237.5px;top:841.5px;width:163.5px;height:16.5px;font-size:9.8px;color:#222;text-align:center;font-weight:700;line-height:16px"><span style="display:inline-block;color:#3a3a3a">0,0 dB (LM: 0,0 dB | Null)</span></div>
<div class="pn" style="left:1405.5px;top:841.5px;width:35.5px;height:16.5px;font-size:7.6px;color:#444;text-align:center;line-height:15px">Lock</div>
<div class="pn" style="left:1445px;top:841.5px;width:35.5px;height:16.5px;font-size:7.6px;color:#444;text-align:center;line-height:15px">DiSEqC</div>
<div class="pn g" style="left:1484px;top:841.5px;width:36px;height:16.5px;font-size:7.6px;color:#587858;background:linear-gradient(#eaf8e8 0%,#cdf0c9 45%,#98e293 55%,#b0e8ab 100%);text-align:center;line-height:15px">Device</div>
<div class="t" style="left:1528px;top:844.5px;font-size:10px;color:#111;letter-spacing:.15px">Control</div>
<svg class="a" style="left:1564px;top:844px" width="24" height="13" viewBox="0 0 24 13"><circle cx="6.6" cy="6.4" r="5.3" fill="#eef2fb" stroke="#b8c4e0" stroke-width=".9"/><path d="M5.8 3.6 v5.4 m-1.4 -1.4 l1.4 1.6 M7.6 9 V3.6 m1.4 1.4 L7.6 3.4" stroke="#4a78c8" stroke-width=".9" fill="none"/><path d="M14.6 5.2 h4.4 l-2.2 2.8z" fill="#222"/></svg>


<div class="a" style="left:0;top:862px;width:1600px;height:38px;background:linear-gradient(90deg,#e5e8f5,#e8eaf6 50%,#e6e8f5);border-top:1px solid #d9dbe2"></div>
<!-- weather -->
<svg class="a" style="left:8px;top:868px" width="26" height="26" viewBox="0 0 26 26">
 <defs><linearGradient id="cg" x1="0" y1="0" x2="0" y2="1"><stop offset="0" stop-color="#dfe9f7"/><stop offset="1" stop-color="#9fb9de"/></linearGradient></defs>
 <path d="M7 17 a4.8 4.8 0 0 1 .2 -9.6 a6.2 6.2 0 0 1 11.6 .8 a4.4 4.4 0 0 1 .2 8.8z" fill="url(#cg)" stroke="#a9c0e2" stroke-width=".6"/>
 <path d="M13.6 13.2 q4.6 3.4 3.4 6.6 q-1.4 2.4 -3.8 .8 q-1.8 -1.8 .4 -7.4z" fill="#2c7be0"/>
</svg>
<div class="t" style="left:36.5px;top:868px;font-size:9.6px;color:#222">10°C</div>
<div class="t" style="left:36.5px;top:881px;font-size:9.8px;color:#555">Pluie fine</div>
<!-- start -->
<svg class="a" style="left:511.5px;top:871px" width="20" height="20" viewBox="0 0 20 20">
 <defs><linearGradient id="wg" x1="0" y1="0" x2="1" y2="1"><stop offset="0" stop-color="#4cc2f4"/><stop offset="1" stop-color="#0a6fd0"/></linearGradient></defs>
 <rect x="0.3" y="0.3" width="9.1" height="9.1" rx=".8" fill="url(#wg)"/><rect x="10.3" y="0.3" width="9.1" height="9.1" rx=".8" fill="url(#wg)"/>
 <rect x="0.3" y="10.3" width="9.1" height="9.1" rx=".8" fill="url(#wg)"/><rect x="10.3" y="10.3" width="9.1" height="9.1" rx=".8" fill="url(#wg)"/>
</svg>
<!-- search pill -->
<div class="a" style="left:543px;top:868px;width:182.5px;height:25.5px;border-radius:13px;background:#f4f6fc;border:1px solid #dfe3ee;box-shadow:0 1px 1px rgba(0,0,0,.04)"></div>
<svg class="a" style="left:551px;top:874px" width="15" height="15" viewBox="0 0 15 15"><circle cx="6.2" cy="6.2" r="4.1" fill="none" stroke="#222" stroke-width="1.4"/><line x1="9.2" y1="9.4" x2="12.6" y2="12.8" stroke="#222" stroke-width="1.5" stroke-linecap="round"/></svg>
<div class="t" style="left:573.5px;top:875px;font-size:10.6px;color:#555;letter-spacing:.1px">Rechercher</div>
<!-- task view -->
<svg class="a" style="left:735px;top:870px" width="24" height="22" viewBox="0 0 24 22"><rect x="7" y="2" width="13.5" height="12" rx="1.5" fill="#f2f2f2" stroke="#dcdcdc" stroke-width=".6"/><rect x="4.5" y="5" width="11" height="10.5" rx="1" fill="#9a9a9a"/><path d="M2 7 V19 H16.5 V15.5 H5.5 V7z" fill="#222"/></svg>
<!-- explorer -->
<svg class="a" style="left:771px;top:870px" width="26" height="22" viewBox="0 0 26 22"><path d="M2 3.5 a1.2 1.2 0 0 1 1.2 -1.2 H9 l2.4 2.7 H22 a1.2 1.2 0 0 1 1.2 1.2 V18 H2z" fill="#f5b730"/><path d="M2 7 H23.2 V18.3 a1 1 0 0 1 -1 1 H3 a1 1 0 0 1 -1 -1z" fill="#fbd35c"/><rect x="7" y="14" width="11" height="5.3" rx=".8" fill="#2486d6"/></svg>
<!-- printer-ish -->
<svg class="a" style="left:809px;top:869px" width="24" height="24" viewBox="0 0 24 24"><rect x="5" y="2.5" width="11" height="7" fill="#e8e8e0" stroke="#b0b0a8" stroke-width=".7"/><rect x="2.5" y="8.5" width="16" height="8" rx="1" fill="#d4d4cc" stroke="#a2a29a" stroke-width=".7"/><rect x="5" y="11" width="5" height="3" fill="#f0d060"/><rect x="11" y="12.5" width="9" height="7" fill="#f6f8fc" stroke="#9ab" stroke-width=".7"/><rect x="12.5" y="14" width="6" height="1.2" fill="#5a86c8"/><rect x="12.5" y="16.3" width="6" height="1.2" fill="#5a86c8"/></svg>
<!-- store -->
<svg class="a" style="left:846px;top:869px" width="23" height="24" viewBox="0 0 23 24"><path d="M7 6 V4.5 a2 2 0 0 1 2 -2 h5 a2 2 0 0 1 2 2 V6" fill="none" stroke="#1a78d6" stroke-width="1.6"/><path d="M1.5 6 H21.5 V18.5 a2.5 2.5 0 0 1 -2.5 2.5 H4 a2.5 2.5 0 0 1 -2.5 -2.5z" fill="#1467c0"/><rect x="7.4" y="9" width="3.6" height="3.6" fill="#f35325"/><rect x="12" y="9" width="3.6" height="3.6" fill="#81bc06"/><rect x="7.4" y="13.6" width="3.6" height="3.6" fill="#05a6f0"/><rect x="12" y="13.6" width="3.6" height="3.6" fill="#ffba08"/></svg>
<!-- speedtest -->
<svg class="a" style="left:883.5px;top:870.5px" width="22" height="21" viewBox="0 0 22 21"><rect x="0" y="0" width="21.5" height="20.5" rx="1" fill="#171a2b"/><path d="M5.6 15.8 a6.6 6.6 0 1 1 10.6 0" fill="none" stroke="#f2f2f6" stroke-width="1.6"/><line x1="10.6" y1="12.4" x2="14" y2="8" stroke="#f2f2f6" stroke-width="1.5" stroke-linecap="round"/></svg>
<!-- maps -->
<svg class="a" style="left:920.5px;top:869.5px" width="21" height="23" viewBox="0 0 21 23"><circle cx="10.5" cy="11.5" r="9.6" fill="#fff"/><path d="M10.5 4 a5 5 0 0 1 5 5 c0 3.2 -3.4 5.2 -5 9.4 c-1.6 -4.2 -5 -6.2 -5 -9.4 a5 5 0 0 1 5 -5z" fill="#34a853"/><path d="M10.5 4 a5 5 0 0 1 5 5 l-5 0z" fill="#4285f4"/><path d="M5.5 9 a5 5 0 0 1 5 -5 v5z" fill="#ea4335"/><path d="M5.5 9 h5 l-3 5.4 c-1.2 -1.8 -2 -3.4 -2 -5.4z" fill="#fbbc04"/><circle cx="10.5" cy="9" r="1.8" fill="#fff"/></svg>
<!-- edge -->
<svg class="a" style="left:957px;top:869.5px" width="23" height="23" viewBox="0 0 23 23"><defs><linearGradient id="eg" x1="0" y1="0" x2="1" y2="1"><stop offset="0" stop-color="#35c1b8"/><stop offset=".55" stop-color="#1b8fd8"/><stop offset="1" stop-color="#0d56a8"/></linearGradient></defs><circle cx="11.5" cy="11.5" r="10.2" fill="url(#eg)"/><path d="M3 13 c1 -6 7 -8.6 12 -6.6 c3 1.2 4.6 4 4.2 6.2 c-.4 1.8 -2.4 2.6 -4.4 2 c1.4 -1.2 1 -3.6 -1.2 -4.6 c-3 -1.2 -6.4 1 -6 4.6 c.3 2.6 2.4 4.4 4.6 5 c-4.6 .6 -9.6 -2.2 -9.2 -6.6z" fill="#e6f6fb" opacity=".92"/></svg>
<!-- itunes -->
<svg class="a" style="left:994px;top:869.5px" width="23" height="23" viewBox="0 0 23 23"><rect x="0.5" y="0.5" width="21.5" height="22" fill="#fcfcfe"/><defs><linearGradient id="ig" x1="0" y1="0" x2="0" y2="1"><stop offset="0" stop-color="#f85ac0"/><stop offset=".5" stop-color="#b45cf0"/><stop offset="1" stop-color="#4aa0ff"/></linearGradient></defs><circle cx="11.3" cy="11.5" r="8.8" fill="#fff" stroke="url(#ig)" stroke-width="1.5"/><path d="M9.2 15.2 V7.6 l5.6 -1.3 v7.4" fill="none" stroke="url(#ig)" stroke-width="1.3"/><ellipse cx="8" cy="15.2" rx="1.6" ry="1.3" fill="#c15ae8"/><ellipse cx="13.6" cy="13.8" rx="1.6" ry="1.3" fill="#c15ae8"/></svg>
<!-- chrome -->
<svg class="a" style="left:1030px;top:865.5px" width="28" height="32" viewBox="0 0 28 32"><circle cx="11.6" cy="15.4" r="10.4" fill="#fbbc04"/><path d="M11.6 15.4 L2.6 10.2 A10.4 10.4 0 0 1 20.6 10.2z" fill="#ea4335"/><path d="M11.6 15.4 L2.6 10.2 A10.4 10.4 0 0 0 11.6 25.8 L16 20z" fill="#34a853"/><path d="M11.6 15.4 L20.6 10.2 A10.4 10.4 0 0 1 11.6 25.8z" fill="#fbbc04"/><circle cx="11.6" cy="15.4" r="4.7" fill="#fff"/><circle cx="11.6" cy="15.4" r="3.7" fill="#4285f4"/><circle cx="19" cy="7.6" r="6.2" fill="#4a4a52"/><circle cx="19" cy="7.6" r="5" fill="#6a8a3a"/><rect x="15" y="5.4" width="8" height="2" fill="#d8d8a0"/><rect x="15.4" y="8.6" width="7" height="1.6" fill="#3a3a8a"/><rect x="8.6" y="29.5" width="5.5" height="1.8" rx=".9" fill="#8a8e9a"/></svg>
<!-- gold app active -->
<div class="a" style="left:1063px;top:865px;width:32px;height:33px;border-radius:4px;background:#f1f3fb;border:1px solid #e9ecf6"></div>
<svg class="a" style="left:1067px;top:868px" width="24" height="30" viewBox="0 0 24 30"><defs><radialGradient id="gg" cx="42%" cy="40%" r="62%"><stop offset="0" stop-color="#e0b440"/><stop offset=".4" stop-color="#7a5410"/><stop offset=".8" stop-color="#2a1c06"/><stop offset="1" stop-color="#120c04"/></radialGradient></defs><circle cx="12" cy="12.4" r="9.6" fill="url(#gg)"/><path d="M12 12.4 L17.5 5.6" stroke="#f6e08a" stroke-width="1.2"/><path d="M6 9 a7 7 0 0 1 5 -3.4" stroke="#f8e8a0" stroke-width="1" fill="none" opacity=".7"/><rect x="5.6" y="26.3" width="13" height="2.4" rx="1.2" fill="#1272d8"/></svg>
<!-- tray -->
<svg class="a" style="left:1405px;top:866px" width="125" height="30" viewBox="1405 866 125 30">
 <path d="M1411.5 884 L1415.6 879.8 L1419.7 884" fill="none" stroke="#222" stroke-width="1.2"/>
 <path d="M1437.5 885 a3.2 3.2 0 0 1 .4 -6.3 a4.3 4.3 0 0 1 8.2 .8 a2.8 2.8 0 0 1 -.2 5.5z" fill="#dfe3ec" stroke="#4a4e56" stroke-width="1"/>
 <circle cx="1445.6" cy="884.6" r="3.6" fill="#1a78d6" stroke="#e4e8f4" stroke-width=".8"/><rect x="1445.2" y="883.8" width=".9" height="2.6" fill="#fff"/><rect x="1445.2" y="882.4" width=".9" height=".9" fill="#fff"/>
 <path d="M1463.6 879.5 a5.4 5.4 0 0 1 9.6 -1.4 m1 -2.6 v3.2 h-3.2 M1474 883.5 a5.4 5.4 0 0 1 -9.6 1.6 m-1 2.6 v-3.2 h3.2" fill="none" stroke="#222" stroke-width="1.1"/>
 <circle cx="1472.8" cy="885.4" r="3.3" fill="#f28c1a"/>
 <rect x="1489.6" y="875.6" width="11" height="8.6" rx=".8" fill="none" stroke="#222" stroke-width="1.1"/><path d="M1492 887.6 h6.4 M1495.2 884.4 v3" stroke="#222" stroke-width="1.1"/><rect x="1499.2" y="873.8" width="4.4" height="6" rx=".8" fill="#e4e8f4" stroke="#222" stroke-width="1"/>
 <path d="M1510 879.4 h2.2 l3 -2.6 v8.6 l-3 -2.6 h-2.2z" fill="none" stroke="#222" stroke-width="1"/><path d="M1517 878.6 q1.6 2.4 0 5" fill="none" stroke="#555" stroke-width=".9"/><path d="M1519.2 876.8 q2.8 4.2 0 8.6" fill="none" stroke="#b8bcc8" stroke-width=".9"/>
</svg>
<div class="t" style="left:1539px;top:868.8px;width:50px;text-align:right;font-size:10.3px;color:#222">20:37</div>
<div class="t" style="left:1529px;top:882px;width:60px;text-align:right;font-size:10.3px;color:#222">15/01/2026</div>


<div id="dlg" class="a" style="left:0;top:0;width:650.5px;height:575.5px;background:#f0f0f0;background-clip:padding-box;border-right:1px solid rgba(0,0,0,.27);border-bottom:1px solid rgba(0,0,0,.3);border-radius:0 0 7.5px 0;box-shadow:0 28px 56px -6px rgba(0,0,0,.44),0 2px 12px rgba(0,0,0,.17);overflow:hidden">
<!-- title bar -->
<div class="a" style="left:0;top:0;width:650px;height:21px;background:#f1f2fa"></div>
<svg class="a" style="left:1px;top:1px" width="14" height="14" viewBox="0 0 14 14"><path d="M1.6 12.6 L12 1.6 Q13.2 8.6 7.4 12.7z" fill="#8f8f94"/><path d="M1.6 1.2 L5.4 9 M1.6 1.2 L9.2 4.2 M1.8 1.4 L7.2 7" stroke="#8f8f94" stroke-width=".9" fill="none"/><rect x="7" y="9.6" width="5.6" height="2.6" fill="#9c9ca0"/></svg>
<div class="t" style="left:19.5px;top:2.5px;font-size:10px;color:#333;transform:scaleX(.97);transform-origin:0 0">Signal Analyzer</div>
<svg class="a" style="left:540px;top:0" width="105" height="16" viewBox="540 0 105 16">
 <line x1="550" y1="8" x2="559" y2="8" stroke="#222" stroke-width="1.1"/>
 <rect x="588.5" y="3.6" width="8.2" height="7.8" rx="1.3" fill="none" stroke="#222" stroke-width="1.1"/>
 <path d="M627 3.6 L634.8 11.6 M634.8 3.6 L627 11.6" stroke="#222" stroke-width="1.1" fill="none"/>
</svg>
<!-- white header -->
<div class="a" style="left:0;top:21px;width:650px;height:42px;background:#fff"></div>
<div class="a" style="left:0;top:62.6px;width:650px;height:1.2px;background:#8c8c8c"></div>
<div class="t" style="left:13px;top:30.5px;font-size:10.3px;font-weight:700;color:#1c1c90;transform:scaleX(.985);transform-origin:0 0">TBS 5927 USB DVB-S2 Tuner</div>
<div class="t" style="left:30px;top:45.5px;font-size:9.2px;color:#555;transform:scaleX(.965);transform-origin:0 0">0.0E - SAT (ID: 0000) @ LOF1: 9750000, LOF2: 10600000, LOFSW: 11700000</div>
<svg class="a" style="left:611px;top:29px" width="26" height="26" viewBox="0 0 26 26"><path d="M2 23.5 L22.6 3.4 Q24.6 15.5 12.8 23.6z" fill="#9b9b9b"/><path d="M3 3.8 L7.8 17.6 M3 3.8 L16.6 7.6" stroke="#9b9b9b" stroke-width="1.3" fill="none"/><path d="M3.4 4 L12.6 13.2" stroke="#9b9b9b" stroke-width="1.9" fill="none"/><circle cx="3.2" cy="3.8" r="1.5" fill="#9b9b9b"/><rect x="12.4" y="17.8" width="11" height="5" rx="1.2" fill="#a4a4a4"/><path d="M14 20.3 h1.6 m1.2 0 h1.5 m1.2 0 h1.7" stroke="#e4e4e4" stroke-width="1"/></svg>
<!-- mode buttons -->
<div class="btn3d down" style="left:3.3px;top:69px;width:87px;height:17.5px">BS Mode</div>
<div class="btn3d" style="left:94px;top:69px;width:87px;height:17.5px">DT Mode</div>
<div class="btn3d" style="left:184.5px;top:69px;width:87.5px;height:17.5px">Signal Mon.</div>
<div class="btn3d" style="left:275.5px;top:69px;width:87.5px;height:17.5px">TSA (Timeout)</div>
<div class="btn3d" style="left:366.3px;top:69px;width:87.5px;height:17.5px">AV Player</div>
<!-- form -->
<div class="t" style="left:147.7px;top:182.8px;transform-origin:0 0">Frequency (MHz):</div>
<div class="edit" style="left:238.5px;top:181.5px;width:103px;height:18px"></div>
<div class="t" style="left:238.5px;top:182.8px;width:90px;text-align:center;font-size:9.4px">12643,000</div>
<div class="a" style="left:328.5px;top:182.6px;width:11.5px;height:7.6px;background:#f1f1f1;border:1px solid #d6d6d6"></div><div class="a" style="left:328.5px;top:190.6px;width:11.5px;height:7.6px;background:#f1f1f1;border:1px solid #d6d6d6"></div>
<svg class="a" style="left:329.8px;top:183.4px" width="9" height="14" viewBox="0 0 9 14"><path d="M2.3 4.6 L4.5 2.2 L6.7 4.6z M2.3 9.6 L4.5 12 L6.7 9.6z" fill="#111"/></svg>
<div class="t" style="left:147.7px;top:204.8px;transform:scaleX(.985);transform-origin:0 0">Search range (MHz):</div>
<div class="edit" style="left:238.5px;top:203.5px;width:103px;height:17.5px"></div>
<div class="t" style="left:238.5px;top:204.6px;width:90px;text-align:center;font-size:9.4px">10</div>
<div class="a" style="left:328.5px;top:204.4px;width:11.5px;height:7.6px;background:#f1f1f1;border:1px solid #d6d6d6"></div><div class="a" style="left:328.5px;top:212.4px;width:11.5px;height:7.6px;background:#f1f1f1;border:1px solid #d6d6d6"></div>
<svg class="a" style="left:329.8px;top:205.2px" width="9" height="14" viewBox="0 0 9 14"><path d="M2.3 4.6 L4.5 2.2 L6.7 4.6z M2.3 9.6 L4.5 12 L6.7 9.6z" fill="#111"/></svg>
<div class="t" style="left:147.7px;top:227.2px;transform:scaleX(.985);transform-origin:0 0">Polarization:</div>
<div class="combo" style="left:238.5px;top:226px;width:103px;height:16px"></div>
<div class="t" style="left:241.5px;top:228px">H/L</div>
<svg class="a" style="left:328px;top:230.5px" width="11" height="8" viewBox="0 0 11 8"><path d="M2 1.8 L5.5 5.2 L9 1.8" fill="none" stroke="#666" stroke-width="1"/></svg>
<div class="t" style="left:147.7px;top:248.2px;transform:scaleX(.985);transform-origin:0 0">Minimal SR (KS/s):</div>
<div class="combo" style="left:238.5px;top:246.5px;width:103px;height:16.7px;border-color:#a8a8a8"></div>
<div class="t" style="left:241.5px;top:248.6px">100</div>
<svg class="a" style="left:328px;top:251.5px" width="11" height="8" viewBox="0 0 11 8"><path d="M2 1.8 L5.5 5.2 L9 1.8" fill="none" stroke="#666" stroke-width="1"/></svg>
<!-- advanced group -->
<div class="a" style="left:147.3px;top:281.5px;width:193.5px;height:86px;border:1px solid #dcdcdc;border-radius:2px"></div>
<div class="a" style="left:152px;top:276px;width:46px;height:10px;background:#f0f0f0"></div>
<div class="t" style="left:154.5px;top:275px;color:#d4262e;font-size:9.3px">Advanced</div>
<div class="t" style="left:158px;top:297px">Standard:</div>
<div class="combo" style="left:228.7px;top:295px;width:102.5px;height:16.3px"></div>
<div class="t" style="left:231.5px;top:297.6px;font-size:9.6px">Auto</div>
<svg class="a" style="left:318px;top:299.5px" width="11" height="8" viewBox="0 0 11 8"><path d="M2 1.8 L5.5 5.2 L9 1.8" fill="none" stroke="#666" stroke-width="1"/></svg>
<div class="t" style="left:158px;top:318.8px">PL Scrambling:</div>
<div class="combo" style="left:228.7px;top:317.5px;width:48px;height:17px"></div>
<div class="t" style="left:231.5px;top:320.4px;font-size:9.6px">Off</div>
<svg class="a" style="left:263.5px;top:322.5px" width="11" height="8" viewBox="0 0 11 8"><path d="M2 1.8 L5.5 5.2 L9 1.8" fill="none" stroke="#666" stroke-width="1"/></svg>
<div class="a" style="left:282.5px;top:317.3px;width:49px;height:18px;background:#f0f0f0;border:1px solid #cfcfcf;border-bottom-color:#bdbdbd"></div>
<div class="t" style="left:283px;top:318.6px;width:33px;text-align:center;color:#8a8a8a">0</div>
<div class="a" style="left:318.4px;top:318.3px;width:1px;height:16px;background:#e0e0e0"></div>
<svg class="a" style="left:320.5px;top:319.3px" width="9" height="14" viewBox="0 0 9 14"><path d="M2.3 4.6 L4.5 2.2 L6.7 4.6z M2.3 9.6 L4.5 12 L6.7 9.6z" fill="#9a9a9a"/></svg>
<div class="t" style="left:226px;top:345px;color:#a6a6a6;letter-spacing:.28px">Auto-search of code</div>
<div class="a" style="left:320px;top:345.5px;width:10.8px;height:10.8px;background:#f7f7f7;border:1px solid #d4d4d4;border-radius:2px"></div>
<!-- elapsed -->
<div class="a" style="left:147.3px;top:376px;width:193px;height:18px;background:#f0f0f0;border:1px solid;border-color:#8e8e8e #f9f9f9 #f9f9f9 #8e8e8e"></div>
<div class="t" style="left:147.3px;top:380.3px;width:193px;text-align:center;color:#eaa83a">Elapsed time: 00:00:00:744</div>
<!-- search carrier -->
<div class="a" style="left:148.3px;top:399.2px;width:191.2px;height:24.2px;background:#fdfdfd;border:1px solid #d6d6d6;border-bottom-color:#c2c2c2;border-radius:3.5px"></div>
<div class="t" style="left:148.3px;top:405.4px;width:189px;text-align:center;font-size:10.4px;color:#111;letter-spacing:.15px">Search Carrier</div>
<svg class="a" style="left:316px;top:400px" width="24" height="24" viewBox="0 0 24 24"><circle cx="8.6" cy="8.4" r="5.3" fill="#f6f8fa" stroke="#a0a4a8" stroke-width="1.3"/><path d="M5.6 6.6 a3.6 3.6 0 0 1 3 -2" stroke="#fff" stroke-width="1" fill="none"/><line x1="12.6" y1="12.4" x2="19.4" y2="19.2" stroke="#4a4a4a" stroke-width="2.6" stroke-linecap="round"/></svg>
<!-- transponder group -->
<div class="a" style="left:490.3px;top:75.2px;width:152.3px;height:399.5px;border:1px solid #dcdcdc;border-radius:2px"></div>
<div class="a" style="left:495px;top:69px;width:77px;height:11px;background:#f0f0f0"></div>
<div class="t" style="left:497.5px;top:68.8px;color:#1c1c90;font-size:9.3px">Transponder [BS]</div>
<div class="t lbl" style="left:497.5px;top:87.6px">Frequency:</div>
<div class="a" style="left:563.5px;top:87.5px;width:4px;height:10.5px;background:#1a6fc4"></div><div class="a" style="left:564.3px;top:93px;width:2.4px;height:1px;background:#dfe9f6"></div>
<div class="t lbl" style="left:497.5px;top:107.7px">Polarization:</div>
<div class="a" style="left:564.6px;top:113.1px;width:2.2px;height:1px;background:#444"></div>
<div class="t lbl" style="left:497.5px;top:127.9px">Symbol Rate:</div>
<div class="a" style="left:564.6px;top:133.3px;width:2.2px;height:1px;background:#444"></div>
<div class="t lbl" style="left:497.5px;top:148.0px">Standard:</div>
<div class="a" style="left:564.6px;top:153.4px;width:2.2px;height:1px;background:#444"></div>
<div class="t lbl" style="left:497.5px;top:168.2px">Modulation:</div>
<div class="a" style="left:564.6px;top:173.6px;width:2.2px;height:1px;background:#444"></div>
<div class="t lbl" style="left:497.5px;top:188.3px">FEC:</div>
<div class="a" style="left:564.6px;top:193.7px;width:2.2px;height:1px;background:#444"></div>
<div class="t lbl" style="left:497.5px;top:208.4px">RollOff:</div>
<div class="a" style="left:564.6px;top:213.8px;width:2.2px;height:1px;background:#444"></div>
<div class="t lbl" style="left:497.5px;top:228.6px">Pilot:</div>
<div class="a" style="left:564.6px;top:234.0px;width:2.2px;height:1px;background:#444"></div>
<div class="t lbl" style="left:497.5px;top:248.7px">Spectrum:</div>
<div class="a" style="left:564.6px;top:254.1px;width:2.2px;height:1px;background:#444"></div>
<div class="t lbl" style="left:497.5px;top:268.9px">Frame Type:</div>
<div class="a" style="left:564.6px;top:274.3px;width:2.2px;height:1px;background:#444"></div>
<div class="t lbl" style="left:497.5px;top:289.0px">Code Mode:</div>
<div class="a" style="left:564.6px;top:294.4px;width:2.2px;height:1px;background:#444"></div>
<div class="t lbl" style="left:497.5px;top:309.1px">Stream type:</div>
<div class="a" style="left:564.6px;top:314.5px;width:2.2px;height:1px;background:#444"></div>
<div class="t lbl" style="left:497.5px;top:329.3px">ISSYI</div>
<div class="a" style="left:564.6px;top:334.7px;width:2.2px;height:1px;background:#444"></div>
<div class="t lbl" style="left:497.5px;top:349.4px">NPD:</div>
<div class="a" style="left:564.6px;top:354.8px;width:2.2px;height:1px;background:#444"></div>
<div class="t lbl" style="left:497.5px;top:369.6px">RF Level:</div>
<div class="a" style="left:564.6px;top:375.0px;width:2.2px;height:1px;background:#444"></div>
<div class="t lbl" style="left:497.5px;top:389.7px">BitRate:</div>
<div class="a" style="left:564.6px;top:395.1px;width:2.2px;height:1px;background:#444"></div>
<div class="t lbl" style="left:497.5px;top:409.8px">CarrierWidth:</div>
<div class="a" style="left:564.6px;top:415.2px;width:2.2px;height:1px;background:#444"></div>
<div class="t lbl" style="left:497.5px;top:442.8px">MIS (0):</div>
<div class="combo" style="left:564.4px;top:440px;width:61.5px;height:17px;border-color:#ececec"></div>
<div class="t" style="left:567.3px;top:443px;color:#8a8a8a">Single</div>
<svg class="a" style="left:613px;top:445.3px" width="11" height="8" viewBox="0 0 11 8"><path d="M2 1.8 L5.5 5.2 L9 1.8" fill="none" stroke="#bdbdbd" stroke-width="1"/></svg>
<div class="a" style="left:492px;top:484px;width:149px;height:18.6px;background:#f7f7f7;border:1px solid #ececec;border-radius:3px"></div>
<svg class="a" style="left:559.5px;top:486.5px" width="15" height="13" viewBox="0 0 15 13"><rect x=".8" y=".8" width="13" height="11" rx="1" fill="#b4b4b4"/><rect x=".8" y="4" width="13" height="1.2" fill="#8a8a8a"/><rect x=".8" y="7.4" width="13" height="1.2" fill="#8a8a8a"/><rect x=".8" y=".8" width="13" height="2.4" fill="#9e9e9e"/></svg>
<!-- status panels -->
<div class="pn g" style="left:3.3px;top:513px;height:16.3px;width:105.3px;padding-left:2px;color:#223a22">Present</div>
<div class="pn" style="left:112.6px;top:513px;height:16.3px;width:208px;padding-left:4px">Level: 0%</div>
<div class="pn" style="left:324.6px;top:513px;height:16.3px;width:207px;padding-left:2px">BER: No lock</div>
<div class="pn" style="left:535.5px;top:513px;height:16.3px;width:105.3px;padding-left:2px">Input (~0 bit/s)</div>
<div class="pn" style="left:3.3px;top:533px;width:105.3px;padding-left:2px">Lock</div>
<div class="pn" style="left:112.6px;top:533px;width:208px;padding-left:4px">Quality: 0%</div>
<div class="pn" style="left:324.6px;top:533px;width:207px;padding-left:4px">SNR: 0,0 dB (Margin: 0,0 dB | Null)</div>
<div class="pn" style="left:535.5px;top:533px;width:105.3px;padding-left:2px">Sync TS</div>
<!-- status bar -->
<div class="a" style="left:0;top:554.5px;width:650px;height:21px;background:#f8f8f8;border-top:1px solid #e6e6e6"></div>
<div class="t sb" style="left:2px;top:560px;font-size:10px;color:#111">No lock -> Last seen: signal not detected yet!</div>
<div class="a" style="left:205px;top:557px;width:1px;height:16px;background:#d0d0d0"></div>
<div class="t sb" style="left:214px;top:560px;width:201px;text-align:center;font-size:9.6px;color:#111">SYNC 0 | TEI 0 | CC 0</div>
<div class="a" style="left:421.5px;top:557px;width:1px;height:16px;background:#d0d0d0"></div>
<div class="t sb" style="left:443.5px;top:560px;font-size:9.75px;color:#111">Best signal: 11,0 dB (2026-01-15 20:34)</div>
<div class="a" style="left:635px;top:557px;width:1px;height:16px;background:#d0d0d0"></div>
<svg class="a" style="left:638px;top:563px" width="10" height="10" viewBox="0 0 10 10"><g fill="#8a8a8a"><rect x="7" y="1.4" width="1.3" height="1.3"/><rect x="4.4" y="4" width="1.3" height="1.3"/><rect x="7" y="4" width="1.3" height="1.3"/><rect x="1.8" y="6.6" width="1.3" height="1.3"/><rect x="4.4" y="6.6" width="1.3" height="1.3"/><rect x="7" y="6.6" width="1.3" height="1.3"/></g></svg>
</div>

</div>
</body></html>
